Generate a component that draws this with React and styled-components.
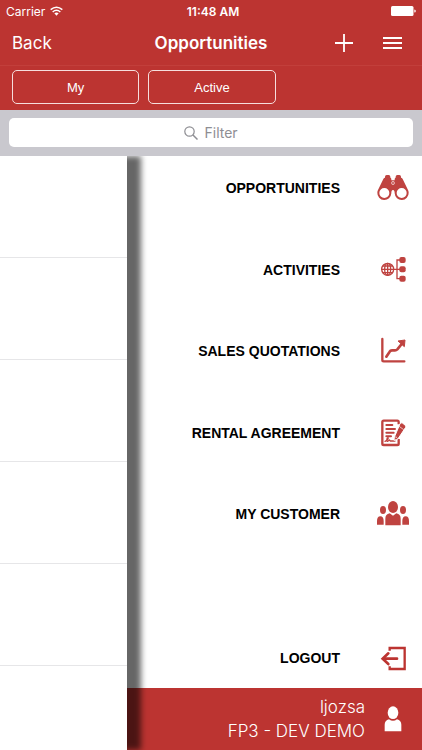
import React, { useState } from 'react';
import styled, { createGlobalStyle } from 'styled-components';

const RED = '#bc3431';
const ICON_RED = '#bf4340';

const GlobalStyle = createGlobalStyle`
  * {
    box-sizing: border-box;
  }

  body {
    margin: 0;
    background: #fff;
    font-family: Inter, 'Liberation Sans', sans-serif;
  }
`;

const Page = styled.div`
  display: flex;
  flex-direction: column;
  min-height: 100vh;
`;

const Header = styled.header`
  background: ${RED};
  color: #fff;
`;

const StatusBar = styled.div`
  display: grid;
  grid-template-columns: 1fr auto 1fr;
  align-items: center;
  height: 22px;
  padding: 0 6px;
  font-size: 12px;
`;

const Carrier = styled.span`
  display: flex;
  align-items: center;
  gap: 5px;
`;

const Clock = styled.span`
  padding-left: 4px;
  font-weight: 600;
`;

const BatterySlot = styled.span`
  display: flex;
  justify-content: flex-end;
`;

const NavBar = styled.nav`
  display: grid;
  grid-template-columns: 1fr auto 1fr;
  align-items: center;
  height: 44px;
  padding: 0 12px 2px;
  border-bottom: 1px solid #c23f3b;
`;

const PlainButton = styled.button`
  display: flex;
  padding: 0;
  border: 0;
  background: none;
  color: inherit;
  font: inherit;
  font-size: 17px;
  line-height: 24px;
  cursor: pointer;
`;

const Title = styled.h1`
  margin: 0;
  font-size: 17px;
  line-height: 24px;
  font-weight: 600;
`;

const NavActions = styled.div`
  display: flex;
  align-items: center;
  justify-content: flex-end;
  gap: 30px;
  padding-right: 8px;
`;

const Segments = styled.div`
  display: flex;
  gap: 9px;
  padding: 4px 12px 6px;
`;

const SegmentButton = styled.button`
  width: 32%;
  height: 34px;
  padding: 0;
  border: 1px solid #f6dedd;
  border-radius: 5px;
  background: none;
  color: #fff;
  font-family: 'Liberation Sans', sans-serif;
  font-size: 13px;
  cursor: pointer;
`;

const SearchBar = styled.div`
  padding: 8px 9px 9px;
  background: #c9c8ce;
`;

const SearchField = styled.label`
  display: flex;
  align-items: center;
  justify-content: center;
  gap: 7px;
  height: 29px;
  border-radius: 5px;
  background: #fff;
  color: #8e8e93;
`;

const SearchInput = styled.input`
  width: 34px;
  padding: 0;
  border: 0;
  outline: 0;
  background: none;
  color: #333;
  font-family: inherit;
  font-size: 14px;

  &::placeholder {
    color: #8e8e93;
    opacity: 1;
  }
`;

const Content = styled.main`
  flex: 1;
  display: flex;
  overflow: hidden;
`;

const Sheet = styled.section`
  position: relative;
  z-index: 1;
  width: 30%;
  background: #fff;
  box-shadow: 14px 0 6px rgba(0, 0, 0, 0.6);
`;

const SheetRow = styled.div`
  height: 102px;
  border-bottom: 1px solid #e6e6e8;
`;

const Drawer = styled.aside`
  flex: 1;
  display: flex;
  flex-direction: column;
`;

const DrawerBody = styled.nav`
  flex: 1;
  display: flex;
  flex-direction: column;
  gap: 112px;
  padding: 16px 13px 14px;
`;

const MenuList = styled.ul`
  flex: 1;
  display: flex;
  flex-direction: column;
  justify-content: space-between;
  margin: 0;
  padding: 0;
  list-style: none;
`;

const MenuLink = styled.a`
  display: flex;
  align-items: center;
  justify-content: flex-end;
  gap: 37px;
  height: 32px;
  color: #000;
  font-family: 'Liberation Sans', sans-serif;
  font-size: 14px;
  font-weight: 700;
  text-decoration: none;

  svg {
    color: ${(props) => (props.$strong ? RED : ICON_RED)};
  }
`;

const UserBar = styled.footer`
  display: flex;
  align-items: center;
  justify-content: flex-end;
  gap: 19px;
  height: 62px;
  padding-right: 20px;
  background: ${RED};
  color: #fff;
`;

const UserText = styled.div`
  font-size: 17px;
  font-weight: 300;
  line-height: 24px;
  text-align: right;
`;

const Icon = ({ children }) => (
  <svg width="32" height="32" viewBox="0 0 96 96" fill="currentColor" aria-hidden="true">
    {children}
  </svg>
);

const BinocularsIcon = () => (
  <Icon>
    <path d="M24 18v-4q0-5 5-5h6q5 0 5 5v4zM56 18v-4q0-5 5-5h6q5 0 5 5v4z" />
    <path
      fillRule="evenodd"
      d="M24 17h16q3 0 3 5v3h10v-3q0-5 3-5h16q3 0 5 4l16 33q2 4 2 8a21 21 0 0 1-42 2c0-6-1-10-5-10s-5 4-5 10a21 21 0 0 1-42-2q0-4 2-8l16-33q2-4 5-4zM22 48a15 15 0 1 0 0 30a15 15 0 1 0 0-30zM74 48a15 15 0 1 0 0 30a15 15 0 1 0 0-30z"
    />
    <circle cx="48" cy="33" r="5" fill="#fff" />
    <circle cx="48" cy="33" r="3" />
  </Icon>
);

const NetworkIcon = () => (
  <Icon>
    <g fill="none" stroke="currentColor" strokeWidth="4">
      <circle cx="32" cy="46" r="18" />
      <ellipse cx="32" cy="46" rx="9" ry="18" />
      <path d="M13 46h56M32 27v38M17 36h30M17 56h30" />
      <path d="M70 18H60v56h10" />
    </g>
    <rect x="67" y="9" width="19" height="18" rx="6" />
    <rect x="67" y="37" width="19" height="18" rx="6" />
    <rect x="67" y="65" width="19" height="18" rx="6" />
  </Icon>
);

const ChartIcon = () => (
  <Icon>
    <path
      d="M16 12v63q0 4 4 4h62"
      fill="none"
      stroke="currentColor"
      strokeWidth="7"
      strokeLinecap="round"
    />
    <path
      d="M28 65L38 50q2-4 7-4h9q4 0 7-3l14-17"
      fill="none"
      stroke="currentColor"
      strokeWidth="8"
      strokeLinecap="round"
      strokeLinejoin="round"
    />
    <path d="M63 18l21-3-2 20z" stroke="currentColor" strokeWidth="3" strokeLinejoin="round" />
  </Icon>
);

const AgreementIcon = () => (
  <Icon>
    <path
      d="M65 22v-7q0-4-4-4H20q-4 0-4 4v65q0 4 4 4h41q4 0 4-4V66"
      fill="none"
      stroke="currentColor"
      strokeWidth="7"
    />
    <path
      d="M28 24h18M28 36h26M28 47h22M28 58h14"
      fill="none"
      stroke="currentColor"
      strokeWidth="6"
      strokeLinecap="round"
    />
    <path
      d="M24 73c7-2 11-10 9-11s-5 6-3 10 6-4 8-3 0 4 4 3h12"
      fill="none"
      stroke="currentColor"
      strokeWidth="4"
      strokeLinecap="round"
    />
    <path
      d="M69 20q3-4 7-2l8 6q4 3 2 7L64 64q-4 5-13 6 0-8 3-14z"
      stroke="#fff"
      strokeWidth="3"
    />
    <path d="M65 27l15 11" stroke="#fff" strokeWidth="2" />
    <path d="M56 58l4 3-4 3z" fill="#fff" />
  </Icon>
);

const PeopleIcon = () => (
  <Icon>
    <ellipse cx="48" cy="27" rx="15" ry="18" />
    <path d="M25 82V62q0-13 13-16l10 7 10-7q13 3 13 16v20z" />
    <ellipse cx="18" cy="36" rx="9" ry="12" />
    <ellipse cx="78" cy="36" rx="9" ry="12" />
    <path d="M0 80V69q0-14 10-14 10 0 10 14v11zM76 80V69q0-14 10-14 10 0 10 14v11z" />
  </Icon>
);

const LogoutIcon = () => (
  <Icon>
    <g fill="none" stroke="currentColor" strokeWidth="7">
      <path d="M38 26V18h45v63H38V73" />
      <path d="M20 50h40" strokeWidth="8" strokeLinecap="round" />
      <path d="M34 34L17 50l17 16" strokeLinecap="round" strokeWidth="8" />
    </g>
  </Icon>
);

const WifiIcon = () => (
  <svg width="13" height="10" viewBox="0 0 39 30" fill="none" stroke="#fff" aria-hidden="true">
    <path d="M2 11q17.500-15 35 0" strokeWidth="4.500" />
    <path d="M8 18q11.500-10 23 0" strokeWidth="4.500" />
    <path d="M13 22q6.500-5 13 0l-6.500 7z" fill="#fff" stroke="none" />
  </svg>
);

const BatteryIcon = () => (
  <svg width="25" height="10" viewBox="0 0 25 10" fill="#fff" aria-hidden="true">
    <rect x="0" y="0" width="22.500" height="10" rx="1.500" />
    <path d="M23.300 3.500q1.500 0 1.500 1.500t-1.500 1.500z" />
  </svg>
);

const PlusIcon = () => (
  <svg width="18" height="18" viewBox="0 0 18 18" stroke="#fff" strokeWidth="1.800" aria-hidden="true">
    <path d="M9 0v18M0 9h18" />
  </svg>
);

const MenuIcon = () => (
  <svg width="19" height="14" viewBox="0 0 19 14" stroke="#fff" strokeWidth="2" aria-hidden="true">
    <path d="M0 2h19M0 7h19M0 12h19" />
  </svg>
);

const SearchIcon = () => (
  <svg width="14" height="14" viewBox="0 0 14 14" fill="none" stroke="currentColor" aria-hidden="true">
    <circle cx="5.500" cy="5.500" r="4.700" strokeWidth="1.200" />
    <path d="M9 9l4.500 4.500" strokeWidth="1.500" />
  </svg>
);

const UserIcon = () => (
  <svg width="18" height="26" viewBox="0 0 54 78" fill="#fff" aria-hidden="true">
    <ellipse cx="27" cy="20" rx="16" ry="19" />
    <path d="M2 76V56q0-12 13-16 12 9 24 0 13 4 13 16v20z" />
  </svg>
);

const menuItems = [
  { label: 'OPPORTUNITIES', icon: BinocularsIcon },
  { label: 'ACTIVITIES', icon: NetworkIcon },
  { label: 'SALES QUOTATIONS', icon: ChartIcon },
  { label: 'RENTAL AGREEMENT', icon: AgreementIcon },
  { label: 'MY CUSTOMER', icon: PeopleIcon },
];

const App = () => {
  const [filter, setFilter] = useState('');

  return (
    <Page>
      <GlobalStyle />
      <Header>
        <StatusBar>
          <Carrier>
            Carrier
            <WifiIcon />
          </Carrier>
          <Clock>11:48 AM</Clock>
          <BatterySlot>
            <BatteryIcon />
          </BatterySlot>
        </StatusBar>
        <NavBar>
          <PlainButton type="button">Back</PlainButton>
          <Title>Opportunities</Title>
          <NavActions>
            <PlainButton type="button" aria-label="Add">
              <PlusIcon />
            </PlainButton>
            <PlainButton type="button" aria-label="Menu">
              <MenuIcon />
            </PlainButton>
          </NavActions>
        </NavBar>
        <Segments>
          <SegmentButton type="button">My</SegmentButton>
          <SegmentButton type="button">Active</SegmentButton>
        </Segments>
      </Header>

      <SearchBar>
        <SearchField>
          <SearchIcon />
          <SearchInput
            type="text"
            aria-label="Filter"
            placeholder="Filter"
            value={filter}
            onChange={(e) => setFilter(e.target.value)}
          />
        </SearchField>
      </SearchBar>

      <Content>
        <Sheet>
          {[1, 2, 3, 4, 5].map((row) => (
            <SheetRow key={row} />
          ))}
        </Sheet>
        <Drawer>
          <DrawerBody>
            <MenuList>
              {menuItems.map(({ label, icon: ItemIcon }) => (
                <li key={label}>
                  <MenuLink href="#">
                    {label}
                    <ItemIcon />
                  </MenuLink>
                </li>
              ))}
            </MenuList>
            <MenuLink href="#" $strong>
              LOGOUT
              <LogoutIcon />
            </MenuLink>
          </DrawerBody>
          <UserBar>
            <UserText>
              <div>ljozsa</div>
              <div>FP3 - DEV DEMO</div>
            </UserText>
            <UserIcon />
          </UserBar>
        </Drawer>
      </Content>
    </Page>
  );
};

export default App;
